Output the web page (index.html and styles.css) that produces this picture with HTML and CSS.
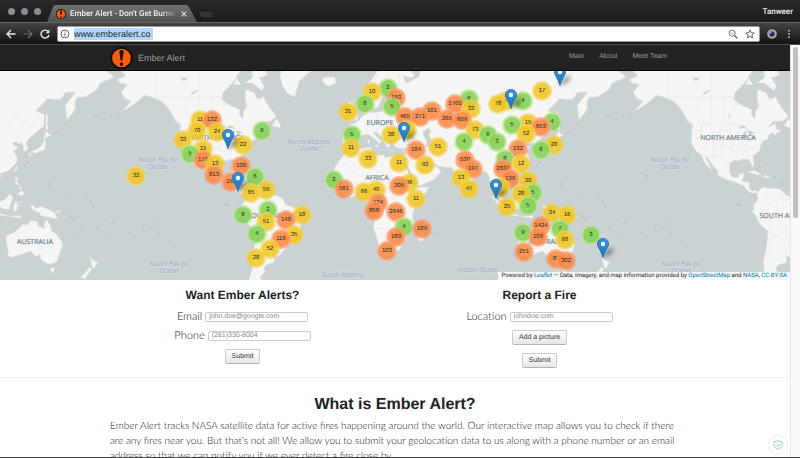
FILE: index.html
```html
<!DOCTYPE html>
<html lang="en">
<head>
<meta charset="utf-8">
<meta name="viewport" content="width=device-width, initial-scale=1">
<title>Ember Alert - Don't Get Burned</title>
<link rel="stylesheet" href="styles.css">
</head>
<body>
<svg class="defs" aria-hidden="true">
  <symbol id="logo" viewBox="0 0 24 24">
    <circle cx="12" cy="12" r="12" fill="#0b0b0b"/>
    <circle cx="12" cy="12" r="10.2" fill="#fe5c05"/>
    <path d="M12 3.4C14 3.4 14.4 4.6 14.2 6.4L13 14.2Q12 16 11 14.2L9.8 6.4C9.6 4.6 10 3.4 12 3.4Z" fill="#140a05"/>
    <ellipse cx="12" cy="18.6" rx="1.8" ry="2" fill="#140a05"/>
  </symbol>
  <symbol id="pin" viewBox="0 0 12 20">
    <path d="M6 .4C2.8.4.4 2.8.4 5.9.4 9 3.6 11.600 6 19.600 8.400 11.600 11.600 9 11.600 5.900 11.600 2.800 9.200.4 6 .4Z" fill="url(#pin-fill)" stroke="#2472ac" stroke-width=".8"/>
    <circle cx="6" cy="6" r="2.200" fill="#fff"/>
  </symbol>
  <linearGradient id="pin-fill" x1="0" y1="0" x2="0" y2="1"><stop offset="0" stop-color="#3b93d6"/><stop offset="1" stop-color="#1775c2"/></linearGradient>
</svg>

<div class="tabs">
  <div class="lights"><i></i><i></i><i></i></div>
  <div class="tab">
    <svg class="tab-shape" viewBox="0 0 150 17" preserveAspectRatio="none" aria-hidden="true">
      <linearGradient id="tab-fill" x1="0" y1="0" x2="0" y2="1"><stop offset="0" stop-color="#727272"/><stop offset="1" stop-color="#505050"/></linearGradient>
      <path d="M0 17 6 2Q7 0 9 0H139Q141 0 142 2L150 17Z" fill="url(#tab-fill)"/>
    </svg>
    <svg class="favicon" aria-hidden="true"><use href="#logo"/></svg>
    <span class="tab-title">Ember Alert - Don't Get Burned</span>
    <button class="close" aria-label="Close tab"><svg viewBox="0 0 6 6"><path d="M.6.6 5.400 5.400M5.400.6.6 5.400" stroke="#e4e4e4" stroke-width="1.100"/></svg></button>
  </div>
  <button class="new-tab" aria-label="New tab"><svg viewBox="0 0 20 9"><path d="M1 1H14Q15 1 16 3L18 8H6Q4 8 3 6Z" fill="#333" stroke="#1a1a1a"/></svg></button>
  <span class="profile">Tanweer</span>
</div>

<div class="toolbar">
  <button class="tool" aria-label="Back"><svg viewBox="0 0 10 10"><path d="M9.500 5H1.200M5 1 1 5l4 4" fill="none" stroke="#eee" stroke-width="1.300"/></svg></button>
  <button class="tool" aria-label="Forward"><svg viewBox="0 0 10 10"><path d="M.5 5h8.300M5 1l4 4-4 4" fill="none" stroke="#6d6d6d" stroke-width="1.200"/></svg></button>
  <button class="tool" aria-label="Reload"><svg viewBox="0 0 10 10"><path d="M8.300 2.700A4 4 0 1 0 9 6" fill="none" stroke="#eee" stroke-width="1.400"/><path d="M9.400.6V4.300H5.700Z" fill="#eee"/></svg></button>
  <label class="address">
    <svg viewBox="0 0 10 10" aria-hidden="true"><circle cx="5" cy="5" r="4" fill="none" stroke="#555" stroke-width=".9"/><path d="M5 4.300V7.400M5 2.500V3.500" stroke="#555" stroke-width="1"/></svg>
    <input type="text" value="www.emberalert.co" size="15" aria-label="Address">
    <svg class="push" viewBox="0 0 10 10" aria-hidden="true"><circle cx="4.200" cy="4.200" r="3" fill="none" stroke="#666" stroke-width=".9"/><path d="M6.500 6.500 9.300 9.300" stroke="#555" stroke-width="1.200"/><path d="M2.800 4.200H5.600" stroke="#888" stroke-width=".7"/></svg>
    <svg viewBox="0 0 10 10" aria-hidden="true"><path d="M5 .9 6.200 3.700 9.200 4 6.900 6 7.600 9 5 7.400 2.400 9 3.100 6 .8 4 3.800 3.700Z" fill="none" stroke="#555" stroke-width=".9"/></svg>
  </label>
  <button class="tool" aria-label="Extension"><svg viewBox="0 0 10 10"><circle cx="5" cy="5" r="3.700" fill="#282832" stroke="#a5a5ab" stroke-width="2.300"/><circle cx="3.300" cy="3.300" r="1.500" fill="#8c88d8"/></svg></button>
  <button class="tool" aria-label="Menu"><svg viewBox="0 0 10 10"><path d="M4.300 1h1.500v1.500H4.300zM4.300 4.200h1.500v1.500H4.300zM4.300 7.400h1.500v1.500H4.300z" fill="#ddd"/></svg></button>
</div>

<div class="viewport">
  <div class="page">
    <header class="navbar">
      <div class="container nav-row">
        <a class="brand" href="#"><svg aria-hidden="true"><use href="#logo"/></svg>Ember Alert</a>
        <nav><a href="#">Main</a><a href="#about">About</a><a href="#">Meet Team</a></nav>
      </div>
    </header>

    <section class="map" id="map" aria-label="Active fires">
      <svg class="world" id="world" aria-hidden="true"></svg>
      <p class="credit">Powered by <a href="#">Leaflet</a> — Data, imagery, and map information provided by <a href="#">OpenStreetMap</a> and <a href="#">NASA</a>, <a href="#">CC-BY-SA</a></p>
    </section>

    <div class="forms">
      <form>
        <h3>Want Ember Alerts?</h3>
        <div class="field"><label for="email">Email</label><input id="email" type="email" placeholder="john.doe@google.com"></div>
        <div class="field"><label for="phone">Phone</label><input id="phone" type="tel" placeholder="(281)330-8004"></div>
        <button class="btn" type="button">Submit</button>
      </form>
      <form>
        <h3>Report a Fire</h3>
        <div class="field"><label for="location">Location</label><input id="location" type="text" placeholder="johndoe.com"></div>
        <button class="btn" type="button">Add a picture</button>
        <button class="btn" type="button">Submit</button>
      </form>
    </div>

    <section class="about" id="about">
      <div class="container">
        <h2>What is Ember Alert?</h2>
        <p>Ember Alert tracks NASA satellite data for active fires happening around the world. Our interactive map allows you to check if there are any fires near you. But that's not all! We allow you to submit your geolocation data to us along with a phone number or an email address so that we can notify you if we ever detect a fire close by.</p>
      </div>
    </section>
  </div>
  <div class="scrollbar"><div class="thumb"></div></div>
  <button class="shield" aria-label="Protection status"><svg viewBox="0 0 10 10"><path d="M5 .7Q3 1.800.9 1.600V4.500Q1 8 5 9.400 9 8 9.100 4.500V1.600Q7 1.800 5 .7Z" fill="none" stroke="#93dba6"/><path d="M3 4.700 4.600 6.300 7.200 3.600" fill="none" stroke="#93dba6"/></svg></button>
</div>
<script src="map.js"></script>
</body>
</html>
```
FILE: styles.css
```css
* { box-sizing: border-box; }
body {
  margin: 0;
  height: 100vh;
  display: flex;
  flex-direction: column;
  overflow: hidden;
  background: #fff;
  color: #222;
  font-family: "Liberation Sans", Arial, sans-serif;
  text-rendering: geometricPrecision;
  border-bottom: 1px solid #444;
}
button, input { text-rendering: inherit; }
button { margin: 0; padding: 0; border: 0; background: none; font: inherit; }
svg { display: block; flex: none; }
a { text-decoration: none; }
.defs { position: absolute; width: 0; height: 0; }

/* Browser chrome */
.tabs {
  display: flex;
  align-items: flex-end;
  flex: none;
  height: 22px;
  background: linear-gradient(#292929, #1b1b1b);
}
.lights { display: flex; gap: 6px; padding: 0 6px 7px 8px; }
.lights i { width: 7px; height: 7px; border-radius: 50%; background: #8d8c92; }
.tab {
  position: relative;
  display: flex;
  align-items: center;
  gap: 4px;
  width: 150px;
  height: 17px;
  padding: 0 10px 0 9px;
}
.tab-shape { position: absolute; inset: 0; width: 100%; height: 100%; }
.favicon { position: relative; width: 10px; height: 10px; }
.tab-title {
  position: relative;
  flex: 1;
  overflow: hidden;
  white-space: nowrap;
  font: 500 8px/12px Roboto, sans-serif;
  color: #f2f2f2;
  -webkit-mask-image: linear-gradient(90deg, #000 85%, transparent);
  mask-image: linear-gradient(90deg, #000 85%, transparent);
}
.close { position: relative; }
.close svg { width: 6px; height: 6px; }
.new-tab { padding-bottom: 3px; }
.new-tab svg { width: 20px; height: 9px; }
.profile { margin-left: auto; padding: 0 7px 4px 0; font: 500 8px/12px Roboto, sans-serif; color: #eee; }
.toolbar {
  display: flex;
  align-items: center;
  flex: none;
  gap: 7px;
  height: 23px;
  padding: 0 6px;
  border-top: 1px solid #666;
  border-bottom: 1px solid #4c4c4c;
  background: linear-gradient(#444, #262626 60%, #111);
}
.tool svg { width: 10px; height: 10px; }
.address {
  display: flex;
  align-items: center;
  flex: 1;
  gap: 4px;
  height: 16px;
  padding: 0 4px 0 2px;
  border: 1px solid #999;
  border-radius: 2px;
  background: #fff;
}
.address svg { width: 10px; height: 10px; }
.address .push { margin-left: auto; margin-right: 3px; }
.address input {
  width: 79px;
  height: 12px;
  padding: 0;
  border: 0;
  background: #b3d7fe;
  font: 9px/12px "Liberation Sans", sans-serif;
  color: #222;
}

/* Page */
.viewport { position: relative; display: flex; flex: 1; min-height: 0; }
.page { flex: 1; min-width: 0; overflow: hidden; }
.scrollbar { flex: none; width: 10px; padding: 2px; border-left: 1px solid #e8e8e8; background: #fafafa; }
.thumb { width: 5px; height: 42%; border-radius: 3px; background: #c1c1c1; }
.container { max-width: 570px; margin: 0 auto; }
.navbar { background: #222; border-bottom: 1px solid #080808; color: #9d9d9d; }
.nav-row { display: flex; align-items: center; justify-content: space-between; height: 25px; }
.brand { display: flex; align-items: center; gap: 5px; font-size: 9px; color: #9d9d9d; }
.brand svg { width: 23px; height: 22px; }
nav { display: flex; gap: 15px; padding: 0 13px 3px 0; font-size: 7px; }
nav a { color: #9d9d9d; }

.map { position: relative; height: 209px; overflow: hidden; background: #cad2d3; }
.world { width: 100%; height: 100%; }
.land { fill: #f5f5f3; stroke: #dfe3e3; stroke-width: .5; }
.lake { fill: #cad2d3; }
.border { fill: none; stroke: #ece6e5; stroke-width: .6; }
.isle { fill: #a8b2b4; }
.continent { font: 7px "Open Sans", sans-serif; fill: #6d8193; stroke: #6d8193; stroke-width: .2; text-anchor: middle; }
.ocean {
  font: italic 7px "Open Sans", sans-serif;
  fill: #96a5bd;
  text-anchor: middle;
  stroke: #dbe1e8;
  stroke-width: 1.5;
  stroke-opacity: .6;
  paint-order: stroke;
}
.cluster {
  position: absolute;
  width: 20px;
  height: 20px;
  margin: -10px 0 0 -10px;
  border-radius: 50%;
  padding: 2px;
}
.cluster b {
  display: block;
  height: 16px;
  border-radius: 50%;
  font: 6px/16px "Liberation Sans", sans-serif;
  text-align: center;
  color: #222;
}
.small { background: rgba(181, 226, 140, .7); }
.small b { background: rgba(110, 204, 57, .6); }
.medium { background: rgba(241, 211, 87, .7); }
.medium b { background: rgba(240, 194, 12, .6); }
.large { background: rgba(253, 156, 115, .75); }
.large b { background: rgba(245, 126, 40, .55); }
.pin { position: absolute; width: 12px; height: 20px; margin: -20px 0 0 -6px; }
.pin svg { position: relative; width: 12px; height: 20px; }
.pin::before {
  content: "";
  position: absolute;
  left: 5px;
  bottom: 3px;
  width: 13px;
  height: 5px;
  border-radius: 50%;
  background: rgba(0, 0, 0, .4);
  filter: blur(2px);
  transform: rotate(-40deg);
}
.credit {
  position: absolute;
  right: 0;
  bottom: 0;
  z-index: 500;
  margin: 0;
  padding: 0 3px;
  background: rgba(255, 255, 255, .8);
  font: 6px/8px Roboto, sans-serif;
  color: #222;
  white-space: nowrap;
}
.credit a { color: #0078a8; }

.forms {
  display: flex;
  width: 602px;
  max-width: 100%;
  margin: 0 auto;
  padding: 7px 8px 9px 0;
}
form { display: flex; flex: 1; flex-direction: column; align-items: center; gap: 8px; }
h3 { margin: 0; font-size: 12px; line-height: 16px; }
.field { display: flex; align-items: center; gap: 3px; height: 11px; }
.field label, .about p { font-family: Lato, "Liberation Sans", sans-serif; font-weight: 300; color: #111; }
.field label { font-size: 11px; line-height: 11px; }
.field input {
  width: 103px;
  height: 10px;
  padding: 0 3px;
  border: 1px solid #ccc;
  border-radius: 2px;
  font: 7px/8px "Liberation Sans", sans-serif;
  color: #555;
}
.field input::placeholder { color: #888; }
.btn {
  height: 15px;
  padding: 0 6px;
  border: 1px solid #ccc;
  border-bottom-color: #b3b3b3;
  border-radius: 2px;
  background: linear-gradient(#fff, #e6e6e6);
  font-size: 7px;
  color: #333;
}
.about { border-top: 1px solid #eee; padding-top: 16px; }
h2 { margin: 0; font-size: 16px; line-height: 22px; text-align: center; }
.about p { margin: 3px 0 0; font-size: 10px; line-height: 15px; }
.shield {
  position: absolute;
  right: 12px;
  bottom: 2px;
  display: grid;
  place-items: center;
  width: 20px;
  height: 20px;
  border: 1px solid #eee;
  border-radius: 50%;
  background: #fff;
}
.shield svg { width: 10px; height: 10px; }
```
FILE: map.js
```js
// Web Mercator at zoom 1: the world is 512px wide.
const WORLD = 512, LON0 = 356, EQUATOR = 204, TOP = 71;
const px = (lon) => LON0 + lon * WORLD / 360;
const py = (lat) => EQUATOR - TOP - WORLD / (2 * Math.PI) * Math.log(Math.tan(Math.PI / 4 + lat * Math.PI / 360));

const LAND = [
  // North America
  "-168,65.6 -162,66.5 -166,68.3 -156,71.3 -141,69.6 -128,70 -115,68 -108,68 -95,68 -94,72 -90,69 -85,69.5 -81,68 -87,64.5 -94,61 -94,58.7 -89,57 -82,55.2 -82,53 -79.5,51.3 -79,54.5 -76.5,56.5 -78,59 -77.5,62.4 -72,61.5 -69,59 -65,60 -61,56 -56,52.5 -60,50.2 -66.5,50.2 -70,47.5 -65,49 -64.5,46.5 -61,46 -66,43.5 -67,45 -70,43.5 -70,41.7 -74,40.5 -76,37 -76,35 -81,32 -80,26.5 -81,25.2 -82.7,28 -84,30 -89,30.2 -90,29 -94,29.5 -97.3,27.5 -97.5,22.5 -96,19 -94,18.2 -91,18.6 -90.3,21 -87,21.4 -88,18 -88.7,15.8 -83.3,15 -83.8,11 -81.5,9 -79.5,9.5 -77.3,8.3 -78,7 -80,8 -80.5,7.3 -83,8.3 -85.7,10.5 -87.5,13 -92,14.5 -95,16 -99,16.7 -105.5,20 -105.5,22.5 -109,26 -113,31 -114.7,31.5 -112.5,28.5 -109.7,23 -112,25 -115,28 -117,32.5 -120.6,34.6 -124,39 -124,46 -123,48.5 -127.5,51 -131,55 -137,58.5 -144,60 -149,60.5 -152,59 -158,56.5 -164,54.7 -158,58.5 -162,59 -165,61.5 -161,64 -166,64.5",
  // Baffin, Newfoundland, Vancouver, Greenland, Iceland, Cuba, Hispaniola
  "-78,64.5 -73,64.5 -66,62 -64.5,63.5 -68,66 -62,66.8 -67,70 -85,72 -80,69 -73,68 -73,66",
  "-86,64 -81,64 -84,66", "-59,48 -53,47 -53.5,49 -56,51.3", "-128,50.6 -123.5,48.4 -125,50",
  "-54,72 -51,69 -53.5,67 -52,64 -48,61 -43,60 -40,65 -33,67.5 -24,70 -20,75 -50,80",
  "-24,65.5 -22,64 -19,63.5 -14,64.5 -15,66.2 -22,66.2",
  "-84.500,22 -80,23 -74.300,20.200 -77.500,20", "-74,18.300 -73,19.800 -68.500,18.600 -71,18",
  // South America
  "-77.3,8.5 -75.5,10.7 -72,12 -71.5,10.8 -68,11 -62,10.5 -60,8.5 -57,6 -51.5,4 -50,0 -44,-2.5 -40,-3 -35.2,-5.5 -35,-8.5 -38.5,-13 -39.3,-18 -41,-22 -45,-23.5 -48.5,-26 -48.7,-28.5 -53,-33.5 -56,-35 -58,-34 -57,-36.5 -58,-38.3 -62,-39 -65,-41 -63.7,-42.5 -67.5,-46 -65.8,-47.5 -69,-51 -68.5,-52.5 -74,-52 -75.5,-47 -73,-42 -73.5,-37 -71.5,-30 -70.3,-18.5 -76,-14 -79,-8 -81.3,-5 -80,-3 -80.8,-1 -78.5,1.5 -77.3,4 -78,7.5",
  // Africa, Madagascar
  "-6,35.8 -10,31 -13,27.7 -17,21 -16.3,17 -17.5,14.7 -15,11 -13,8.5 -8,4.4 -3,5 2,6.3 6,4.3 9,4.5 9.5,0 9,-1 12,-5.5 13.7,-10 12,-16 14.5,-22.5 16.5,-29 18.4,-34.2 20,-34.8 26,-34 31,-30 33,-26 35.5,-24 35,-20 40.5,-15 39.5,-7 41.5,-2 47,4.5 51.3,12 43,11.5 39.5,15.5 37,21 34,27 32.5,30 34.3,31.3 31.2,31.4 25,31.6 20,31 20,32.5 15,32.3 10,34 11,37 0,36",
  "49,-12 50.5,-16 47,-25 44,-25 43.5,-22 44.5,-16",
  // Eurasia
  "-5.6,36 -9,37 -9.5,39 -9,43.2 -1.7,43.4 -1,46 -4.7,48.4 1.5,50 4,52 8,54 8.5,57 10.5,57.5 10,54 14,54 19,54.5 21.5,57.5 24,57.3 24,59.3 30,60 22,60.3 21.5,63 25.3,65 22,65.8 17.5,62 18.5,60 16.5,57 14,55.5 12.5,56.5 11,59 7,58 5,60 6,62.5 12,66 16,68.5 26,71 41,67 40,66 33,66.6 35,64.3 44,66.2 46,68.3 60,69 68,69 70,73 100,77 140,73 180,69 190,66.2 180,64.5 178,62.5 170,60 164,59.8 162,58 163,56 160,53 156.7,51 155.7,57 163,61.5 156,61.5 152,59 143,59.3 135,54.7 141,53 140.5,48 132,43 128,40 129.4,36 126.5,34.5 126,37.5 125,39.5 121.5,39 122,40.5 118,39 122.5,37 119.2,35 121.9,31 121.5,28 116,23 110,21 108,21.7 106,19 109,12.5 105,8.7 105,10.5 102.5,12 100.5,13.4 99.3,10 100.5,7 103.4,4 104,1.4 101,3 98.3,8 98.5,14 97,17 94.3,16 94,18 91.5,22.5 87,21.3 82,16.7 80.2,15 80.3,13 79.8,10.3 77.5,8.1 76,11 73,16 72.7,21 69,22.3 67,25 61.5,25.2 57.2,26 56.5,27 52,27.5 50,30 48,30 50,26.5 51.5,25 54,24.2 56,26 59.8,22.5 55,17 45,12.8 43,13 42.5,16.5 39,21 35,28 34.3,31.3 36,36.5 30.5,36.5 27.5,37 26.5,39.5 29,41 35,42 41.5,41.5 37,45 39,47.2 35,46.2 33.5,44.5 31,46.6 28,43.5 28,41.5 26,40.7 23,40.4 24,38 22.5,36.5 19.5,40 19.5,41.8 13.7,45.5 12.3,44.5 16,41.8 18.3,40 16.5,39.7 15.7,38 15.5,40 10.5,43 8,44 3.5,43.3 3,41.8 -.5,38.5 -2,36.8",
  // Britain, Ireland, Mediterranean islands
  "-5,50 1,51 1.500,52.800 -2,55.500 -2,57.600 -5,58.600 -5.500,56 -3,54 -5,52", "-10,52 -6,52.300 -6,55 -9,54.500",
  "12.500,38 15.500,38.200 15,36.700", "8.300,39 9.700,39.200 9.300,41 8.300,41", "23.500,35.300 26,35.200 24,34.900", "32.300,35 34.500,35.500 33,34.600",
  // Japan, Sakhalin, Taiwan, Philippines, Hainan, Sri Lanka
  "140,41.500 145.500,43.300 142,45.500 141,43", "141,41.300 142,39.500 140.700,35.500 137,34.600 135.500,33.600 131,34.200 136,36 139,38",
  "130,33.700 132,33.200 130.500,31.200", "142,54 143.500,52 143,49 143.500,46 142,46.500 142,50", "121,25.200 122,25 120.800,22 120,23.500",
  "120.500,18.500 122.300,18.300 121.700,15 124,12.700 120.500,14", "122,7 125.500,9.700 126.400,7 125.300,5.800", "123,11.500 125,12 124,9.500", "108.700,19.200 111,20 110,18.300", "80,9.700 81.800,7.500 80.500,6",
  // Indonesia and New Guinea
  "95.300,5.500 98,4.300 103.500,-.8 106,-3 105.800,-5.800 102.300,-4 98.500,1.500", "105.300,-6.500 108.500,-6.500 114.500,-7.700 114.500,-8.700 106.500,-7.400",
  "109,1.500 113,3 116.500,7 119,5 117.500,1 116,-4 110.300,-3", "119,-3 120,1 125,1.500 121,0 123.300,-1 121.500,-2 122.500,-5 121,-3.500 120.300,-5.600 119.400,-5.500", "116,-8.500 120,-8.300 125,-8.300 124,-10 119,-9",
  "131,-.7 134,-1 135,-3.300 138,-1.700 145,-4.300 147.700,-6 150.500,-10.500 147,-9.700 143,-9 138,-8.300 138,-6.500 133,-4 132,-2.700",
  "148.500,-5.800 152,-4.200 151.500,-5.800",
  // Australia, Tasmania, New Zealand
  "114,-22 114,-26 115.700,-32 115,-34.300 118,-35 124,-33.500 131,-31.500 135.500,-34.800 138,-33 138,-35.600 140,-37.500 143.500,-38.800 147,-38.500 150,-37.300 151.500,-33 153.500,-28.500 153,-25.500 149,-20.500 146,-18.500 145,-14.800 142.500,-10.800 141,-13 140.800,-17.300 136,-15 136.500,-12.200 131,-11.500 129,-15 126,-14 122.300,-17.500 119,-20",
  "145,-40.800 148.300,-41 147,-43.600 145.500,-42.500", "173,-34.500 175,-36.700 178.500,-37.700 175.500,-41.500 173.800,-39.300", "172.700,-40.600 174.200,-41.700 171,-44.500 169.500,-46.500 166.500,-46 170,-43"
];
const LAKES = [
  "47,45 51,47 53,45 51,44 53,41 54,37 49,37.5 50,40.5 47.5,43",
  "-92,46.700 -88,48.500 -84.500,46.500 -88,47", "-88,42 -87.500,45 -85,46 -86.300,42", "-84.500,46 -80,45 -82,43.300 -83.500,44", "-83,41.600 -79,42.800 -82,42.500", "-79.500,43.300 -76.500,44", "-117,61.200 -110,62.500 -114,60.900", "-124,66 -118,66 -121,65", "-98.500,53.500 -97,50.500 -97,52.500"
];
const BORDERS = [
  "-141,69.6 -141,60 -131,56", "-137,60 -102,60 -94.500,60", "-123,49 -95,49 -88,48", "-120,60 -120,54 -114,49", "-110,70 -110,49", "-102,60 -101,49", "-95,57 -89,57",
  "-117,49 -117,42", "-124,46 -117,46", "-124,42 -111,42", "-120,42 -120,39 -114.500,35", "-114,42 -114,36", "-111,45 -111,42 -109,42", "-109,41 -109,31.500", "-111,45 -104,45", "-104,49 -104,41", "-109,41 -95,41", "-109,37 -94.500,37", "-102,41 -102,37", "-104,43 -96,43", "-103,37 -103,32 -106,32", "-104,46 -96.500,46", "-97,49 -96,43 -95,40 -94.500,33 -94,30", "-91,43 -91,36 -91,31", "-88,42 -88,37", "-85,42 -85,39 -89,37 -82,36.600 -76,36.600", "-88,35 -88.300,30.500", "-85,35 -85,31", "-117,32.500 -111,31.300 -106,31.500 -101,29.500 -97,26",
  "-72,11 -72,7 -67,6 -70,-4 -80,-4", "-60,8 -60,2 -52,4", "-67,2 -60,4", "-70,-4 -73,-10 -69,-11 -69,-18 -67,-23 -62,-22 -58,-20 -58,-16 -65,-10 -69,-11", "-70,-18 -69,-26 -71,-35 -72,-47", "-62,-22 -58,-27 -54,-26 -57,-30 -53,-33", "-58,-20 -54,-24",
  "-9,27.500 -5,25 3,19 6,20 12,24 9,31 8,36", "12,24 24,20 25,31", "24,22 35,22", "15,23 15,13 8,13 4,13 -4,15 -12,15", "24,20 22,12 27,5 35,5 41,4", "9,5 15,8 22,11", "12,-5 18,4 27,5 30,-3 30,-9 24,-11 22,-17 12,-17", "20,-17 20,-28 30,-23 32,-26", "30,-16 36,-12 40,-11", "35,5 34,-1 39,-5", "42,11 48,8 45,3",
  "27,60 31,63 29,69", "24,66 20,69", "12,60 12,64 16,68", "28,57 31,53 38,50 39,47", "14,54 15,50 8,47 7,44", "24,54 24,50 18,48 15,46", "2,51 7,48", "22,48 28,46", "50,48 55,51 70,55 80,51 87,49 98,50 108,49.500 117,49.500 120,53 130,48 134,48", "87,49 97,43 105,42 112,45 119,47", "56,41 66,38 74,37 80,42 87,48", "74,37 79,31 88,28 97,28 98,24 106,22", "61,35 61,26", "66,38 66,30 61,30", "70,24 74,32", "44,40 45,34 48,30", "35,28 42,31 47,29 56,20 45,17", "98,20 101,16 105,18 107,13"
];
const ISLES = [[-178,51],[-172,52.5],[-168,53],[177,52],[-176,51.5],[155,49],[152,46.5],[148,44.5],[150,45.5],[-156,20],[-158,21.5],[-155,19],[145,15],[144,13],[158,7],[171,7],[173,2],[175,-1],[160,-9],[157,-7.5],[162,-10.5],[168,-16],[167,-15],[165,-21],[178,-18],[179,-17],[-175,-21],[-172,-14],[-171,-13.5],[-150,-17],[-149,-18],[-140,-9],[-145,-16],[-143,-18],[-139,-20],[-130,-25],[-160,-20],[-91,-.5],[-90,-1],[-66,18],[-61,15],[-61,13],[55,-21],[57.5,-20],[55,-4],[73,4],[-16,28],[-24,15.5],[-23,16],[-28,38.5],[-25,37.5],[127,26],[129,28],[-78,24],[-76,25],[-58,-51]];

// Label positions on the central copy of the world
const CONTINENTS = [[216,137,"NORTH AMERICA"],[275,215,"SOUTH AMERICA"],[380,122,"EUROPE"],[377,177,"AFRICA"],[547,241,"AUSTRALIA"]];
const OCEANS = [[158,160,"North Pacific","Ocean"],[169,264,"South Pacific","Ocean"],[309,142,"North Atlantic","Ocean"],[343,275,"South Atlantic",""],[478,270,"Indian Ocean",""]];

const path = (s) => s.split(" ").map((p, i) => {
  const [lon, lat] = p.split(",").map(Number);
  return (i ? "L" : "M") + px(lon).toFixed(1) + " " + py(lat).toFixed(1);
}).join("");
const layer = (cls, list, end) => `<path class="${cls}" d="${list.map((s) => path(s) + end).join("")}"/>`;

const tile = layer("land", LAND, "Z") + layer("lake", LAKES, "Z") + layer("border", BORDERS, "") +
  ISLES.map(([lon, lat]) => `<circle class="isle" cx="${px(lon).toFixed(1)}" cy="${py(lat).toFixed(1)}" r=".7"/>`).join("");
const labels = (dx) => {
  const seen = ([x]) => x + dx > -20 && x + dx < innerWidth + 20;
  return CONTINENTS.filter(seen).map(([x, y, name]) => `<text class="continent" x="${x + dx}" y="${y + 3 - TOP}">${name}</text>`).join("") +
    OCEANS.filter(seen).map(([x, y, a, b]) => `<text class="ocean" x="${x + dx}" y="${y + 2 - TOP}">${a}<tspan x="${x + dx}" dy="7">${b}</tspan></text>`).join("");
};
const copies = [];
for (let n = -1; (n - 1) * WORLD < innerWidth; n++) copies.push(n * WORLD);
document.getElementById("world").innerHTML =
  copies.map((dx) => `<g transform="translate(${dx} 0)">${tile}</g>`).join("") + copies.map(labels).join("");

// x, y, number of fires, size class
const S = "small", M = "medium", L = "large";
const CLUSTERS = [
  [136,176,32,M],[200,120,11,M],[212,120,132,L],[197,131,70,M],[217,132,24,M],[183,140,33,M],[243,145,22,M],[190,154,5,S],[203,149,15,M],[203,160,179,L],[215,164,13,M],[214,175,813,L],[241,166,100,L],[231,182,155,L],[262,131,6,S],[255,177,6,S],[251,193,65,M],[266,190,59,M],[268,210,2,S],[243,215,8,S],[266,222,51,M],[286,220,148,L],[302,215,18,M],[257,234,4,S],[294,235,35,M],[281,239,116,L],[270,249,52,M],[256,258,28,M],
  [372,92,10,M],[388,88,2,S],[396,98,193,L],[365,104,8,S],[392,107,5,S],[348,112,31,M],[405,117,465,L],[420,117,271,L],[432,111,101,L],[352,135,5,S],[391,135,38,M],[407,130,"",M],[351,148,11,M],[368,159,33,M],[416,150,184,L],[438,147,51,M],[399,163,11,M],[425,165,92,M],[334,180,2,S],[344,189,581,L],[364,192,66,M],[376,190,40,M],[399,186,305,L],[409,183,96,M],[416,199,11,M],[378,203,124,L],[374,211,858,L],[396,212,2646,L],[404,227,4,S],[422,229,189,L],[396,237,189,L],[387,251,103,L],
  [455,104,1701,L],[469,99,6,S],[471,109,33,M],[498,104,78,M],[506,101,4,M],[523,101,4,S],[542,91,17,M],[447,119,265,L],[462,120,609,L],[512,125,5,S],[528,123,15,M],[541,127,653,L],[552,122,4,S],[526,134,52,M],[475,130,73,M],[488,135,6,S],[497,142,3,S],[464,142,4,S],[554,145,28,M],[541,150,6,S],[518,149,132,L],[465,160,530,L],[473,169,197,L],[505,159,8,S],[503,169,2637,L],[521,164,12,M],[461,178,13,M],[510,179,139,L],[528,181,30,M],[500,187,"",M],[469,189,47,M],[521,194,28,M],[533,193,5,S],[507,207,25,M],[528,206,5,S],[552,213,34,M],[567,215,16,M],[541,226,1424,L],[560,229,7,S],[523,233,9,S],[538,237,109,L],[565,240,68,M],[524,252,251,L],[556,259,83,L],[566,261,302,L],[591,235,3,S]
];
const PINS = [[228,149],[238,192],[404,142],[511,109],[496,199],[560,86],[603,258]];

const place = (x, y) => `left:${x}px;top:${y - TOP}px;z-index:${y}`;
document.getElementById("map").insertAdjacentHTML("beforeend",
  CLUSTERS.map(([x, y, n, size]) => `<div class="cluster ${size}" style="${place(x, y)}"><b>${n}</b></div>`).join("") +
  PINS.map(([x, y]) => `<div class="pin" style="${place(x, y)}"><svg><use href="#pin"/></svg></div>`).join(""));
```
